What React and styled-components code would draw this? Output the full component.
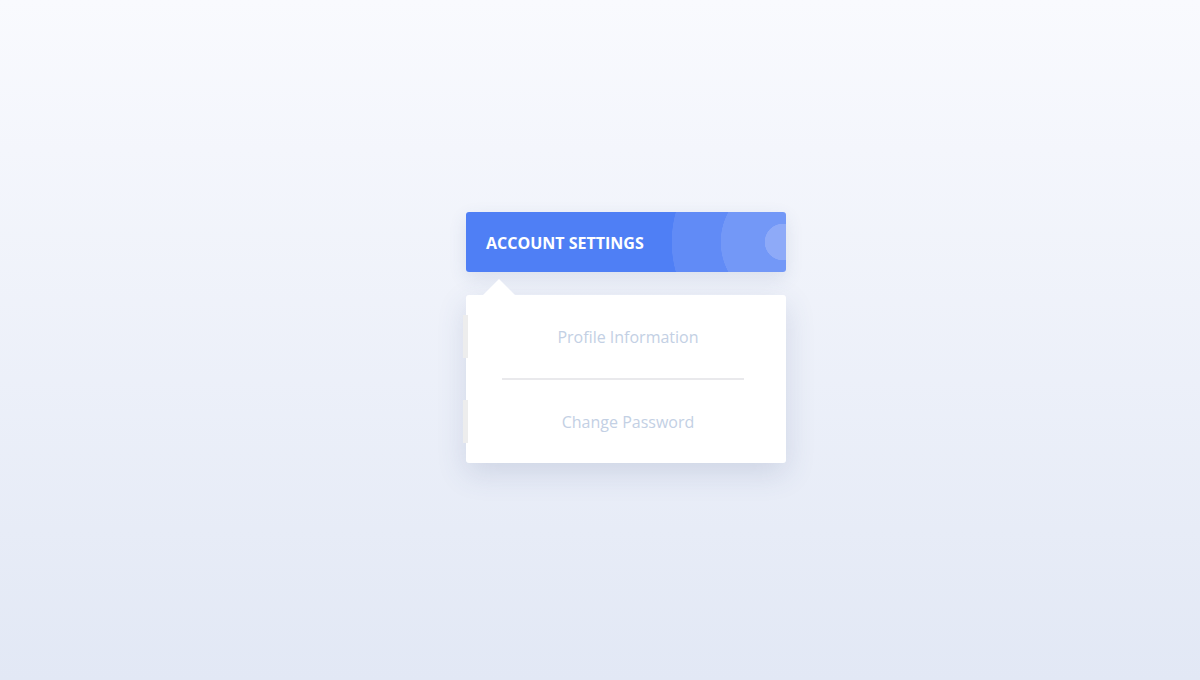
import styled, { createGlobalStyle } from "styled-components";

const GlobalStyle = createGlobalStyle`
  html, body {
    margin: 0;
    height: 100%;
  }
  body {
    background: linear-gradient(180deg, #f9fafe 0%, #e2e8f5 100%);
    font-family: "Open Sans", "Noto Sans", sans-serif;
    min-height: 680px;
  }
`;

const Page = styled.div`
  display: flex;
  justify-content: center;
  padding: 212px 0 0 52px;
`;

const Dropdown = styled.div`
  width: 320px;
  display: flex;
  flex-direction: column;
  gap: 23px;
`;

const Header = styled.div`
  height: 60px;
  border-radius: 3px;
  background: radial-gradient(
    circle at calc(100% - 3px) 50%,
    #8eaaf8 0 18px,
    #7398f7 18.5px 62px,
    #618bf6 62.5px 111px,
    #4f7ff5 111.5px
  );
  display: flex;
  align-items: center;
  padding: 0 20px;
  box-shadow: 0 6px 18px rgba(60, 80, 130, 0.12);
`;

const Title = styled.h2`
  margin: 0;
  padding-top: 2px;
  color: #fff;
  font-size: 16px;
  font-weight: 700;
  text-transform: uppercase;
`;

const Menu = styled.ul`
  position: relative;
  list-style: none;
  margin: 0;
  padding: 20px 0;
  background: #fff;
  border-radius: 3px;
  box-shadow: 0 10px 30px rgba(60, 80, 130, 0.16);

  &::before {
    content: "";
    position: absolute;
    top: -16px;
    left: 17px;
    border-left: 16px solid transparent;
    border-right: 16px solid transparent;
    border-bottom: 16px solid #fff;
  }
`;

const Item = styled.li`
  position: relative;
  height: 43px;
  line-height: 45px;
  padding-left: 4px;
  text-align: center;
  color: #c3d0e4;
  font-size: 16px;

  &::before {
    content: "";
    position: absolute;
    left: -3px;
    top: 0;
    width: 5px;
    height: 100%;
    background: #ededed;
  }
`;

const Divider = styled.li`
  height: 2px;
  margin: 20px 42px 20px 36px;
  background: #e9e9ec;
`;

const items = ["Profile Information", "Change Password"];

const App = () => {
  return (
    <>
      <GlobalStyle />
      <Page>
        <Dropdown>
          <Header>
            <Title>Account Settings</Title>
          </Header>
          <Menu>
            <Item>{items[0]}</Item>
            <Divider />
            <Item>{items[1]}</Item>
          </Menu>
        </Dropdown>
      </Page>
    </>
  );
};

export default App;
